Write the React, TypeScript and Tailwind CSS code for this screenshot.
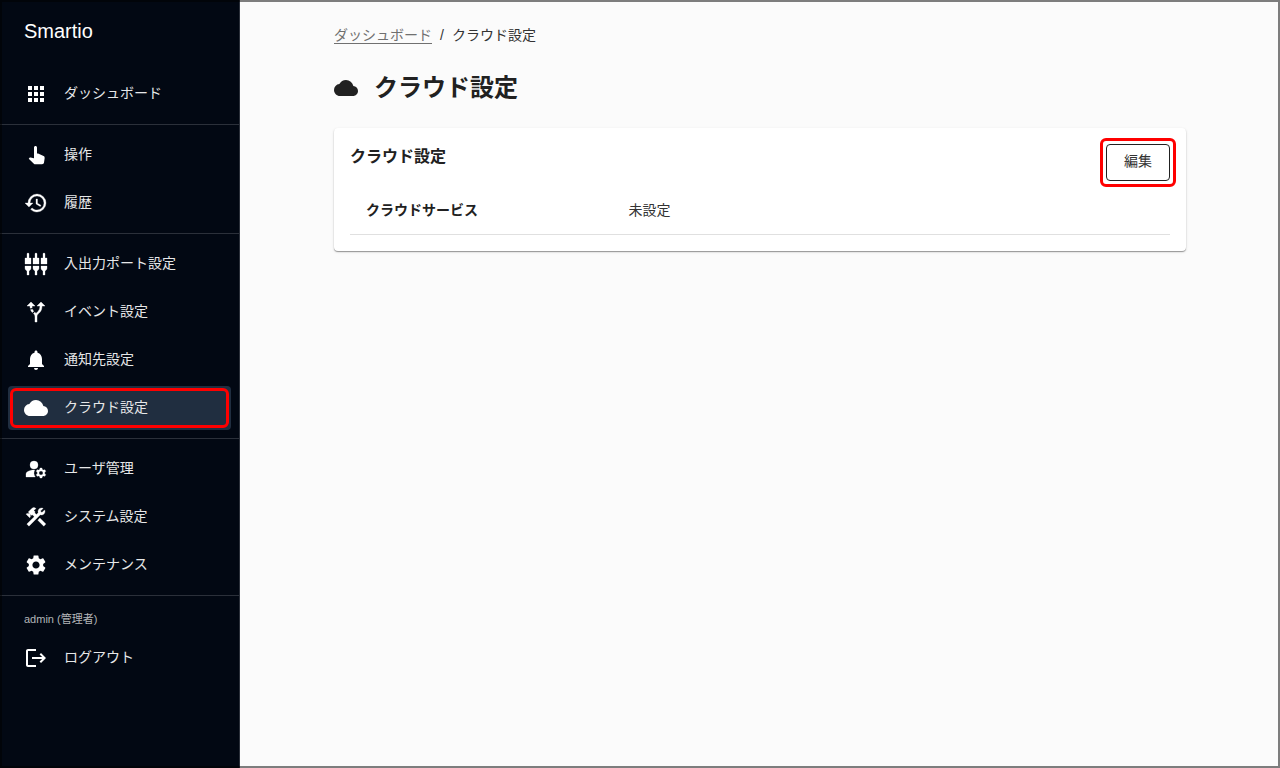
import type { ReactNode } from "react";
import {
  MdAltRoute,
  MdApps,
  MdCloud,
  MdConstruction,
  MdLogout,
  MdManageAccounts,
  MdNotifications,
  MdSettings,
  MdSettingsInputComponent,
} from "react-icons/md";

function TouchIcon() {
  return (
    <svg width="24" height="24" viewBox="0 0 24 24" fill="currentColor" aria-hidden="true">
      <path d="M11.5 3c-.83 0-1.5.67-1.5 1.5v10.74l-3.44-.72c-.37-.08-.76.04-1.03.31l-.79.8 5.11 5.11c.37.37.88.58 1.41.58h6.78c1 0 1.84-.73 1.98-1.72l.63-4.46c.12-.85-.32-1.68-1.09-2.07l-4.35-2.11C14.93 10.82 14.6 10.5 14 10.5H13v-6c0-.83-.67-1.5-1.5-1.5z" />
    </svg>
  );
}

function HistoryIcon() {
  return (
    <svg
      width="24"
      height="24"
      viewBox="0 0 24 24"
      fill="currentColor"
      stroke="currentColor"
      strokeWidth="0.3"
      aria-hidden="true"
    >
      <path d="M13.5 8H12v5l4.28 2.54.72-1.21-3.5-2.08V8M13 3a9 9 0 0 0-9 9H1l3.96 4.03L9 12H6a7 7 0 0 1 7-7 7 7 0 0 1 7 7 7 7 0 0 1-7 7c-1.93 0-3.68-.79-4.94-2.06l-1.42 1.42C8.27 20 10.5 21 13 21a9 9 0 0 0 9-9 9 9 0 0 0-9-9" />
    </svg>
  );
}

// Thickened icons: the transparent bounding path must not pick up the stroke.
const bold = "[&_[fill=none]]:hidden";

type Item = { label: string; icon: ReactNode; active?: boolean };

const groups: Item[][] = [
  [{ label: "ダッシュボード", icon: <MdApps size={24} /> }],
  [
    { label: "操作", icon: <TouchIcon /> },
    { label: "履歴", icon: <HistoryIcon /> },
  ],
  [
    {
      label: "入出力ポート設定",
      icon: <MdSettingsInputComponent size={24} strokeWidth={0.3} className={bold} />,
    },
    { label: "イベント設定", icon: <MdAltRoute size={24} strokeWidth={0.4} className={bold} /> },
    { label: "通知先設定", icon: <MdNotifications size={24} /> },
    { label: "クラウド設定", icon: <MdCloud size={24} />, active: true },
  ],
  [
    {
      label: "ユーザ管理",
      icon: <MdManageAccounts size={24} strokeWidth={0.3} className={bold} />,
    },
    {
      label: "システム設定",
      icon: <MdConstruction size={24} strokeWidth={0.3} className={bold} />,
    },
    { label: "メンテナンス", icon: <MdSettings size={24} /> },
  ],
];

function NavItem({ label, icon, active }: Item) {
  return (
    <li>
      <a
        href="#"
        aria-current={active ? "page" : undefined}
        className={
          active
            ? "relative flex h-11 items-center gap-4 rounded bg-[#202e40] px-4"
            : "relative flex h-11 items-center gap-4 rounded px-4"
        }
      >
        {icon}
        <span className="pb-0.5 text-sm text-[#e6e7e8]">{label}</span>
        {active && (
          <span className="absolute inset-0.5 rounded-md border-3 border-[#ff0000]" />
        )}
      </a>
    </li>
  );
}

export default function App() {
  return (
    <div className="relative flex min-h-screen bg-[#fbfbfb] font-['Liberation_Sans','Noto_Sans_CJK_JP',sans-serif] text-[#212121]">
      <nav className="flex w-60 shrink-0 flex-col border-r border-[#2b303a] bg-[#020813] text-white">
        <div className="flex h-16 items-center px-6 pb-0.5 text-xl">Smartio</div>
        {groups.map((items, i) => (
          <ul
            key={i}
            className="flex flex-col gap-1 border-b border-[#2b303a] px-2 py-2"
          >
            {items.map((item) => (
              <NavItem key={item.label} {...item} />
            ))}
          </ul>
        ))}
        <p className="px-6 pt-[15px] pb-px text-[11px] leading-4 text-[#b3b5b8]">
          admin (管理者)
        </p>
        <ul className="px-2 py-2">
          <NavItem label="ログアウト" icon={<MdLogout size={24} />} />
        </ul>
      </nav>

      <main className="flex-1 px-[94px] pt-[23px]">
        <nav aria-label="パンくずリスト" className="flex gap-2 text-sm leading-6 text-[#333333]">
          <a href="#" className="text-[#707070] underline underline-offset-3">
            ダッシュボード
          </a>
          <span>/</span>
          <span>クラウド設定</span>
        </nav>

        <h1 className="mt-[21px] flex items-center gap-4 text-2xl leading-10 font-bold">
          <MdCloud size={24} />
          クラウド設定
        </h1>

        <section className="mt-5 rounded bg-white px-4 pb-4 shadow-[0_1px_1px_rgba(0,0,0,0.35),0_1px_3px_rgba(0,0,0,0.12)]">
          <div className="flex items-start justify-between pt-4">
            <h2 className="text-base leading-[26px] font-bold">クラウド設定</h2>
            <button
              type="button"
              className="relative h-[37px] w-16 rounded border border-[#212121] pb-1 text-sm text-[#333333]"
            >
              編集
              <span className="absolute -inset-[7px] rounded-md border-3 border-[#ff0000]" />
            </button>
          </div>
          <table className="mt-1.5 w-full table-fixed text-sm">
            <tbody>
              <tr className="h-[47px] border-b border-[#e0e0e0]">
                <th scope="row" className="w-[32%] px-4 pb-px text-left font-bold">
                  クラウドサービス
                </th>
                <td className="px-4 pb-px text-[#333333]">未設定</td>
              </tr>
            </tbody>
          </table>
        </section>
      </main>

      <div className="pointer-events-none absolute inset-0 border-2 border-black/50" />
    </div>
  );
}
